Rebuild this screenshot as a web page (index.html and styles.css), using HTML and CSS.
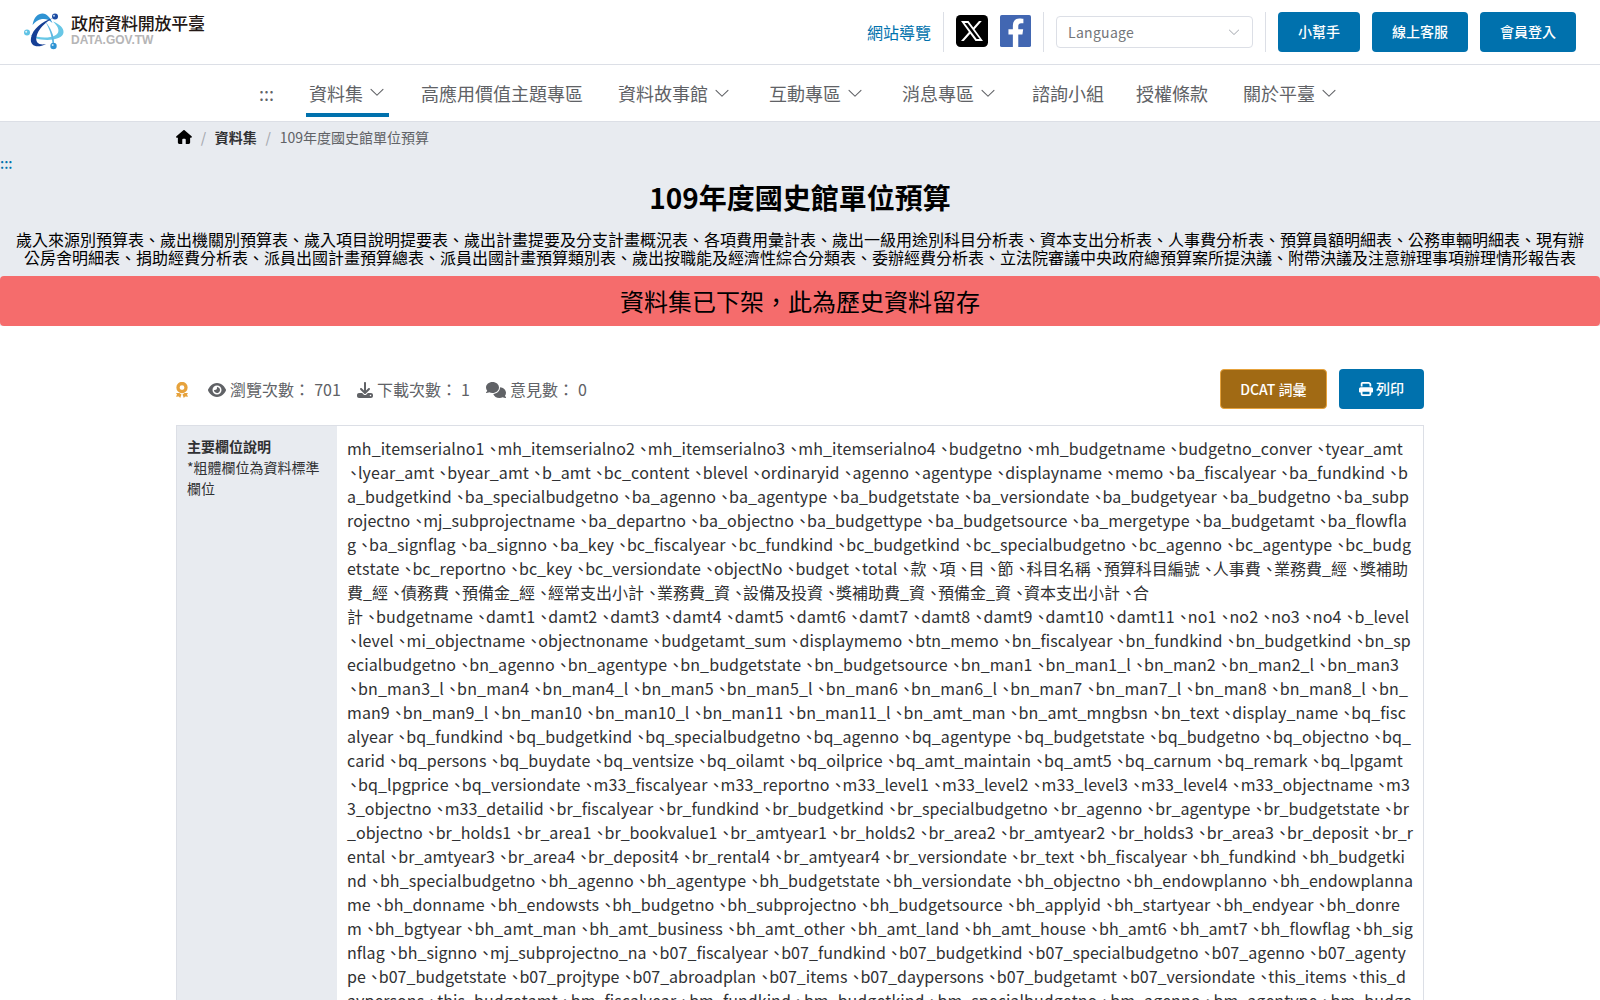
FILE: index.html
```html
<!DOCTYPE html>
<html lang="zh-Hant-TW">
<head>
<meta charset="utf-8">
<title>109年度國史館單位預算 | 政府資料開放平臺</title>
<link rel="stylesheet" href="styles.css">
</head>
<body>

<svg class="sprite">
  <symbol id="arrow" viewBox="0 0 1024 1024"><path fill="currentColor" d="M831.872 340.864 512 652.672 192.128 340.864a30.592 30.592 0 0 0-42.752 0 29.12 29.12 0 0 0 0 41.6L489.664 714.24a32 32 0 0 0 44.672 0l340.288-331.712a29.12 29.12 0 0 0 0-41.728 30.592 30.592 0 0 0-42.752 0z"/></symbol>
</svg>

<header class="top">
  <a class="logo">
    <svg class="logo-mark" width="40" height="38" viewBox="0 0 40 38">
      <path d="M8.500 12C10 4 14 .5 18.500 .5C23 .5 26.500 5 28.500 10C25 6.500 22 5.500 18 6C14 6.500 11.500 8.500 8.500 12Z" fill="#2f93d3"/>
      <path d="M29 8.500C35.500 11 40 15 39.500 19.500C39 25.500 28 28 17 26.500C13 26 9 24.500 6.500 22C14 25 25.500 25.500 31 22.500C37 19.500 34.500 13.500 29 8.500Z" fill="#68c7e6"/>
      <path d="M29 5C18 8.500 8.500 16 7 25C5.500 33.500 14 35.500 22 31C15.500 32.500 11 30 12.500 23.500C14 16.500 21 9.500 29 5Z" fill="#163f95"/>
      <path d="M21 8C27 15 30.500 23 30 31L28.500 31C28 22.500 25 14.500 21 8Z" fill="#5fb8e2"/>
      <circle cx="31" cy="3.500" r="3" fill="#1c4ba2"/>
      <circle cx="3" cy="19.500" r="3" fill="#5fc3e5"/>
      <circle cx="29.500" cy="33" r="3.200" fill="#2f93d3"/>
      <circle cx="30" cy="2.800" r="1" fill="#b8d4ee"/>
      <circle cx="2.200" cy="18.700" r="1" fill="#e4f6fc"/>
      <circle cx="28.700" cy="32" r="1" fill="#c5e5f6"/>
    </svg>
    <span class="logo-text">
      <span class="logo-name">政府資料開放平臺</span>
      <span class="logo-url">DATA.GOV.TW</span>
    </span>
  </a>
  <div class="tools">
    <a class="sitemap">網站導覽</a>
    <i class="divider"></i>
    <svg class="social" width="32" height="32" viewBox="0 0 32 32"><rect width="32" height="32" rx="4.500" fill="#000"/><path fill="#fff" d="M5 6h7.500l4.800 6.500L23 6h2.800l-7.200 8.200L27 26h-7.500l-5.300-7.300L7.800 26H5l7.900-9.100z"/><path fill="#000" d="M8.600 7.900h3l12 16.200h-3z"/></svg>
    <svg class="social" width="31" height="32" viewBox="0 32 448 448" preserveAspectRatio="none"><rect y="32" width="448" height="448" rx="26" fill="#4267b2"/><path fill="#fff" d="M186 480V306h-64v-73h64v-55c0-63 38-98 95-98 28 0 57 5 57 5v63h-32c-32 0-42 20-42 40v45h71l-11 73h-60v174z"/></svg>
    <i class="divider"></i>
    <div class="select"><span>Language</span><svg width="14" height="14"><use href="#arrow"/></svg></div>
    <i class="divider"></i>
    <a class="btn">小幫手</a>
    <a class="btn">線上客服</a>
    <a class="btn">會員登入</a>
  </div>
</header>

<nav class="nav">
  <a>:::</a>
  <a class="sub active">資料集<svg><use href="#arrow"/></svg></a>
  <a>高應用價值主題專區</a>
  <a class="sub">資料故事館<svg><use href="#arrow"/></svg></a>
  <a class="sub">互動專區<svg><use href="#arrow"/></svg></a>
  <a class="sub">消息專區<svg><use href="#arrow"/></svg></a>
  <a>諮詢小組</a>
  <a>授權條款</a>
  <a class="sub">關於平臺<svg><use href="#arrow"/></svg></a>
</nav>

<div class="banner">
  <div class="breadcrumb">
    <svg width="16" height="14" viewBox="0 0 576 512"><path d="M575.800 255.500c0 18-15 32.100-32 32.100h-32l.7 160.200c0 36-22 64.200-54 64.200H352V352c0-18-14-32-32-32h-64c-18 0-32 14-32 32v160H118c-32 0-54-28-54-64.200V287.600H32c-18 0-32-14-32-32.100 0-9 3-17 10-24L266.400 8c7-7 15-8 22-8s15 2 21 7l255.400 224.500c8 7 12 15 11 24z"/></svg>
    <i>/</i><b>資料集</b><i>/</i><span>109年度國史館單位預算</span>
  </div>
  <a class="anchor">:::</a>
  <h1>109年度國史館單位預算</h1>
  <p class="desc">歲入來源別預算表、歲出機關別預算表、歲入項目說明提要表、歲出計畫提要及分支計畫概況表、各項費用彙計表、歲出一級用途別科目分析表、資本支出分析表、人事費分析表、預算員額明細表、公務車輛明細表、現有辦公房舍明細表、捐助經費分析表、派員出國計畫預算總表、派員出國計畫預算類別表、歲出按職能及經濟性綜合分類表、委辦經費分析表、立法院審議中央政府總預算案所提決議、附帶決議及注意辦理事項辦理情形報告表</p>
  <div class="alert">資料集已下架，此為歷史資料留存</div>
</div>

<main class="main">
  <div class="stats">
    <svg class="medal" width="12" height="16" viewBox="0 0 12 16"><circle cx="6" cy="5.500" r="4" fill="none" stroke="#e6a23c" stroke-width="3.300"/><path d="M0 11h3.500l2 1.500L4.200 16 2.800 14.400 0 14.800l1-2.300zM12 11H8.500l-2 1.500L7.800 16l1.400-1.600 2.800.4-1-2.300z" fill="#e6a23c"/></svg>
    <span><svg width="18" height="16" viewBox="0 0 576 512"><path d="M288 32c-80.800 0-145.500 36.800-192.600 80.600C48.600 156 17.300 208 2.500 243.700c-3.300 7.900-3.300 16.700 0 24.600C17.300 304 48.600 356 95.400 399.400 142.500 443.200 207.200 480 288 480s145.500-36.800 192.600-80.600c46.800-43.500 78.100-95.400 93-131.100 3.300-7.900 3.300-16.700 0-24.600-14.900-35.700-46.200-87.700-93-131.100C433.500 68.800 368.800 32 288 32zM144 256a144 144 0 1 1 288 0 144 144 0 1 1-288 0zm144-64c0 35.300-28.700 64-64 64-7.100 0-13.900-1.200-20.300-3.300-5.500-1.800-11.900 1.600-11.700 7.400.3 6.900 1.300 13.800 3.200 20.700 13.700 51.200 66.400 81.600 117.600 67.900s81.600-66.400 67.900-117.600c-11.100-41.500-47.800-69.400-88.600-71.100-5.800-.2-9.200 6.100-7.400 11.700 2.100 6.400 3.300 13.200 3.300 20.300z"/></svg> 瀏覽次數： 701</span>
    <span><svg width="16" height="16" viewBox="0 0 512 512"><path d="M288 32c0-17.700-14.300-32-32-32s-32 14.300-32 32v242.700l-73.400-73.400c-12.500-12.500-32.800-12.500-45.300 0s-12.500 32.800 0 45.300l128 128c12.500 12.500 32.800 12.500 45.300 0l128-128c12.500-12.500 12.500-32.800 0-45.300s-32.800-12.500-45.300 0L288 274.700V32zM64 352c-35.300 0-64 28.700-64 64v32c0 35.300 28.700 64 64 64h384c35.300 0 64-28.700 64-64v-32c0-35.300-28.700-64-64-64H346.500l-45.300 45.300c-25 25-65.500 25-90.500 0L165.500 352H64zm368 56a24 24 0 1 1 0 48 24 24 0 1 1 0-48z"/></svg> 下載次數： 1</span>
    <span><svg width="20" height="16" viewBox="0 0 640 512"><path d="M208 352c114.900 0 208-78.800 208-176S322.900 0 208 0 0 78.800 0 176c0 38.600 14.700 74.300 39.600 103.400-3.500 9.400-8.700 17.700-14.200 24.700-4.800 6.200-9.700 11-13.300 14.300-11 8.600-15 13-10.900 22.400C3.500 347.500 9.400 352 16 352c21.900 0 43.800-5.600 61.900-12.800 9.200-3.700 17.800-7.900 25.300-12.200C134.100 343.300 169.800 352 208 352zm240-176c0 112.300-99.100 196.900-216.500 207C255.800 457.400 336.400 512 432 512c38.200 0 73.900-8.700 104.700-23.900 26.600 14.700 57.100 23.900 87.300 23.900 6.500 0 12.400-4.500 15.200-10.600s1-13.300-4.500-18c-8-7.500-20-20.600-27.100-39.700C625.300 414.600 640 379 640 340c0-94-87.200-170.800-196.900-175.600 3.200 3.700 4.900 7.500 4.900 11.600z"/></svg> 意見數： 0</span>
    <a class="btn dcat">DCAT 詞彙</a>
    <a class="btn"><svg width="14" height="14" viewBox="0 0 512 512"><path d="M128 0C92.700 0 64 28.700 64 64v96h64V64h226.700L384 93.300V160h64V93.300c0-17-6.700-33.300-18.700-45.300L400 18.700C388 6.700 371.700 0 354.700 0H128zm256 352v96H128v-96h256zm64 32h32c17.700 0 32-14.300 32-32v-96c0-35.300-28.700-64-64-64H64c-35.300 0-64 28.700-64 64v96c0 17.700 14.300 32 32 32h32v64c0 35.300 28.700 64 64 64h256c35.300 0 64-28.700 64-64v-64z"/></svg> 列印</a>
  </div>

  <div class="table">
    <div class="label"><b>主要欄位說明</b><br>*粗體欄位為資料標準欄位</div>
    <div class="fields"></div>
  </div>
</main>

<script src="fields.js"></script>
</body>
</html>
```

FILE: styles.css
```css
body { margin: 0; height: 1000px; overflow: hidden; font-family: "Noto Sans CJK TC", sans-serif; font-size: 16px; color: #303133; background: #fff; }
* { box-sizing: border-box; }
svg { fill: currentColor; flex: none; }
i { font-style: normal; }
.sprite { display: none; }

.top { display: flex; justify-content: space-between; align-items: center; height: 65px; padding: 0 24px; border-bottom: 1px solid #dcdfe6; }
.logo { display: flex; gap: 7px; height: 38px; }
.logo-text { display: flex; flex-direction: column; color: #231815; }
.logo-name { font-size: 17px; line-height: 19px; font-weight: 500; letter-spacing: -0.3px; }
.logo-url { font: bold 12px/16px "Liberation Sans", Arial, sans-serif; color: #b5b5b6; }
.tools { display: flex; align-items: center; gap: 12px; }
.sitemap { color: #0071ad; }
.divider { width: 1px; height: 40px; background: #dcdfe6; }
.social { margin-top: -2px; }
.select { display: flex; align-items: center; justify-content: space-between; width: 197px; height: 32px; padding: 0 11px; border: 1px solid #dcdfe6; border-radius: 4px; font-size: 14px; letter-spacing: .3px; color: #73767a; }
.select svg { color: #a8abb2; }
.btn { height: 40px; padding: 0 20px; border-radius: 4px; background: #0071ad; color: #fff; font-size: 14px; font-weight: 500; line-height: 39px; }

.nav { display: flex; justify-content: center; gap: 32px; height: 57px; padding-top: 4px; border-bottom: 1px solid #dcdfe6; font-size: 18px; line-height: 49px; color: #606266; }
.nav .sub { display: flex; align-items: center; height: 49px; padding: 0 3px; }
.nav .active { box-shadow: 0 4px #0071ad; height: 44px; align-items: flex-start; }
.nav svg { width: 18px; height: 18px; margin: -1px 0 0 5px; }
.nav .active svg { margin-top: 14px; }

.banner { height: 204px; background: #e8ebf0; color: #000; }
.breadcrumb { display: flex; align-items: center; height: 30px; padding-left: 176px; font-size: 14px; color: #606266; }
.breadcrumb i { margin: 0 8.7px; color: #a8abb2; font-weight: 500; }
.breadcrumb b { color: #303133; }
.breadcrumb svg { fill: #000; }
.anchor { display: block; height: 24px; font-size: 14px; font-weight: 500; line-height: 22px; color: #0071ad; }
h1 { margin: 0; height: 54px; font-size: 28px; line-height: 42px; text-align: center; }
.desc { margin: 0 16px; height: 46px; line-height: 18px; text-align: center; }
.alert { height: 50px; border-radius: 4px; background: #f56c6c; font-size: 24px; line-height: 50px; text-align: center; }

.main { width: 1248px; margin: 43px auto 0; }
.stats { display: flex; align-items: center; height: 40px; margin-bottom: 16px; color: #606266; }
.stats span { margin-right: 16px; white-space: pre; word-spacing: .5px; }
.stats span svg { vertical-align: -2px; }
.medal { margin: 1px 20px 0 0; }
.dcat { margin-left: auto; margin-right: 12px; padding: 0 19.3px; border: 1px solid #e6a23c; background: #a16a14; line-height: 38px; }
.stats .btn svg { vertical-align: -2px; }

.table { display: flex; height: 640px; border: 1px solid #dcdfe6; }
.label { width: 160px; padding: 10px; background: #e8ebf0; font-size: 14px; line-height: 21px; }
.fields { padding: 10px; line-height: 24px; white-space: pre; font-kerning: none; font-feature-settings: "liga"; }
.row { width: max-content; }
.sep { margin-left: .5px; letter-spacing: -3.5px; }
.first { margin-left: -1.5px; }
```

FILE: fields.js
```js
// field names of the dataset: [row width, text], "|" is the separator
var rows = [
  [1056, 'mh_itemserialno1|mh_itemserialno2|mh_itemserialno3|mh_itemserialno4|budgetno|mh_budgetname|budgetno_conver|tyear_amt'],
  [1061, '|lyear_amt|byear_amt|b_amt|bc_content|blevel|ordinaryid|agenno|agentype|displayname|memo|ba_fiscalyear|ba_fundkind|b'],
  [1062, 'a_budgetkind|ba_specialbudgetno|ba_agenno|ba_agentype|ba_budgetstate|ba_versiondate|ba_budgetyear|ba_budgetno|ba_subp'],
  [1060, 'rojectno|mj_subprojectname|ba_departno|ba_objectno|ba_budgettype|ba_budgetsource|ba_mergetype|ba_budgetamt|ba_flowfla'],
  [1064, 'g|ba_signflag|ba_signno|ba_key|bc_fiscalyear|bc_fundkind|bc_budgetkind|bc_specialbudgetno|bc_agenno|bc_agentype|bc_budg'],
  [1061, 'etstate|bc_reportno|bc_key|bc_versiondate|objectNo|budget|total|款|項|目|節|科目名稱|預算科目編號|人事費|業務費_經|獎補助'],
  [802, '費_經|債務費|預備金_經|經常支出小計|業務費_資|設備及投資|獎補助費_資|預備金_資|資本支出小計|合'],
  [1062, '計|budgetname|damt1|damt2|damt3|damt4|damt5|damt6|damt7|damt8|damt9|damt10|damt11|no1|no2|no3|no4|b_level'],
  [1064, '|level|mi_objectname|objectnoname|budgetamt_sum|displaymemo|btn_memo|bn_fiscalyear|bn_fundkind|bn_budgetkind|bn_sp'],
  [1052, 'ecialbudgetno|bn_agenno|bn_agentype|bn_budgetstate|bn_budgetsource|bn_man1|bn_man1_l|bn_man2|bn_man2_l|bn_man3'],
  [1061, '|bn_man3_l|bn_man4|bn_man4_l|bn_man5|bn_man5_l|bn_man6|bn_man6_l|bn_man7|bn_man7_l|bn_man8|bn_man8_l|bn_'],
  [1059, 'man9|bn_man9_l|bn_man10|bn_man10_l|bn_man11|bn_man11_l|bn_amt_man|bn_amt_mngbsn|bn_text|display_name|bq_fisc'],
  [1064, 'alyear|bq_fundkind|bq_budgetkind|bq_specialbudgetno|bq_agenno|bq_agentype|bq_budgetstate|bq_budgetno|bq_objectno|bq_'],
  [1056, 'carid|bq_persons|bq_buydate|bq_ventsize|bq_oilamt|bq_oilprice|bq_amt_maintain|bq_amt5|bq_carnum|bq_remark|bq_lpgamt'],
  [1063, '|bq_lpgprice|bq_versiondate|m33_fiscalyear|m33_reportno|m33_level1|m33_level2|m33_level3|m33_level4|m33_objectname|m3'],
  [1062, '3_objectno|m33_detailid|br_fiscalyear|br_fundkind|br_budgetkind|br_specialbudgetno|br_agenno|br_agentype|br_budgetstate|br'],
  [1066, '_objectno|br_holds1|br_area1|br_bookvalue1|br_amtyear1|br_holds2|br_area2|br_amtyear2|br_holds3|br_area3|br_deposit|br_r'],
  [1058, 'ental|br_amtyear3|br_area4|br_deposit4|br_rental4|br_amtyear4|br_versiondate|br_text|bh_fiscalyear|bh_fundkind|bh_budgetki'],
  [1066, 'nd|bh_specialbudgetno|bh_agenno|bh_agentype|bh_budgetstate|bh_versiondate|bh_objectno|bh_endowplanno|bh_endowplanna'],
  [1053, 'me|bh_donname|bh_endowsts|bh_budgetno|bh_subprojectno|bh_budgetsource|bh_applyid|bh_startyear|bh_endyear|bh_donre'],
  [1066, 'm|bh_bgtyear|bh_amt_man|bh_amt_business|bh_amt_other|bh_amt_land|bh_amt_house|bh_amt6|bh_amt7|bh_flowflag|bh_sig'],
  [1059, 'nflag|bh_signno|mj_subprojectno_na|b07_fiscalyear|b07_fundkind|b07_budgetkind|b07_specialbudgetno|b07_agenno|b07_agenty'],
  [1059, 'pe|b07_budgetstate|b07_projtype|b07_abroadplan|b07_items|b07_daypersons|b07_budgetamt|b07_versiondate|this_items|this_d'],
  [1065, 'aypersons|this_budgetamt|bm_fiscalyear|bm_fundkind|bm_budgetkind|bm_specialbudgetno|bm_agenno|bm_agentype|bm_budge']
];

var box = document.querySelector('.fields');
rows.forEach(function (r) {
  var el = document.createElement('div');
  el.className = 'row';
  el.innerHTML = r[1].replace(/\|/g, function (m, i) {
    return '<span class="sep' + (i ? '' : ' first') + '">、</span>';
  });
  box.appendChild(el);
  // spread the letters so the row fills its width
  var letters = r[1].replace(/\|/g, '').length;
  el.style.letterSpacing = (r[0] - el.getBoundingClientRect().width) / letters + 'px';
});
```
